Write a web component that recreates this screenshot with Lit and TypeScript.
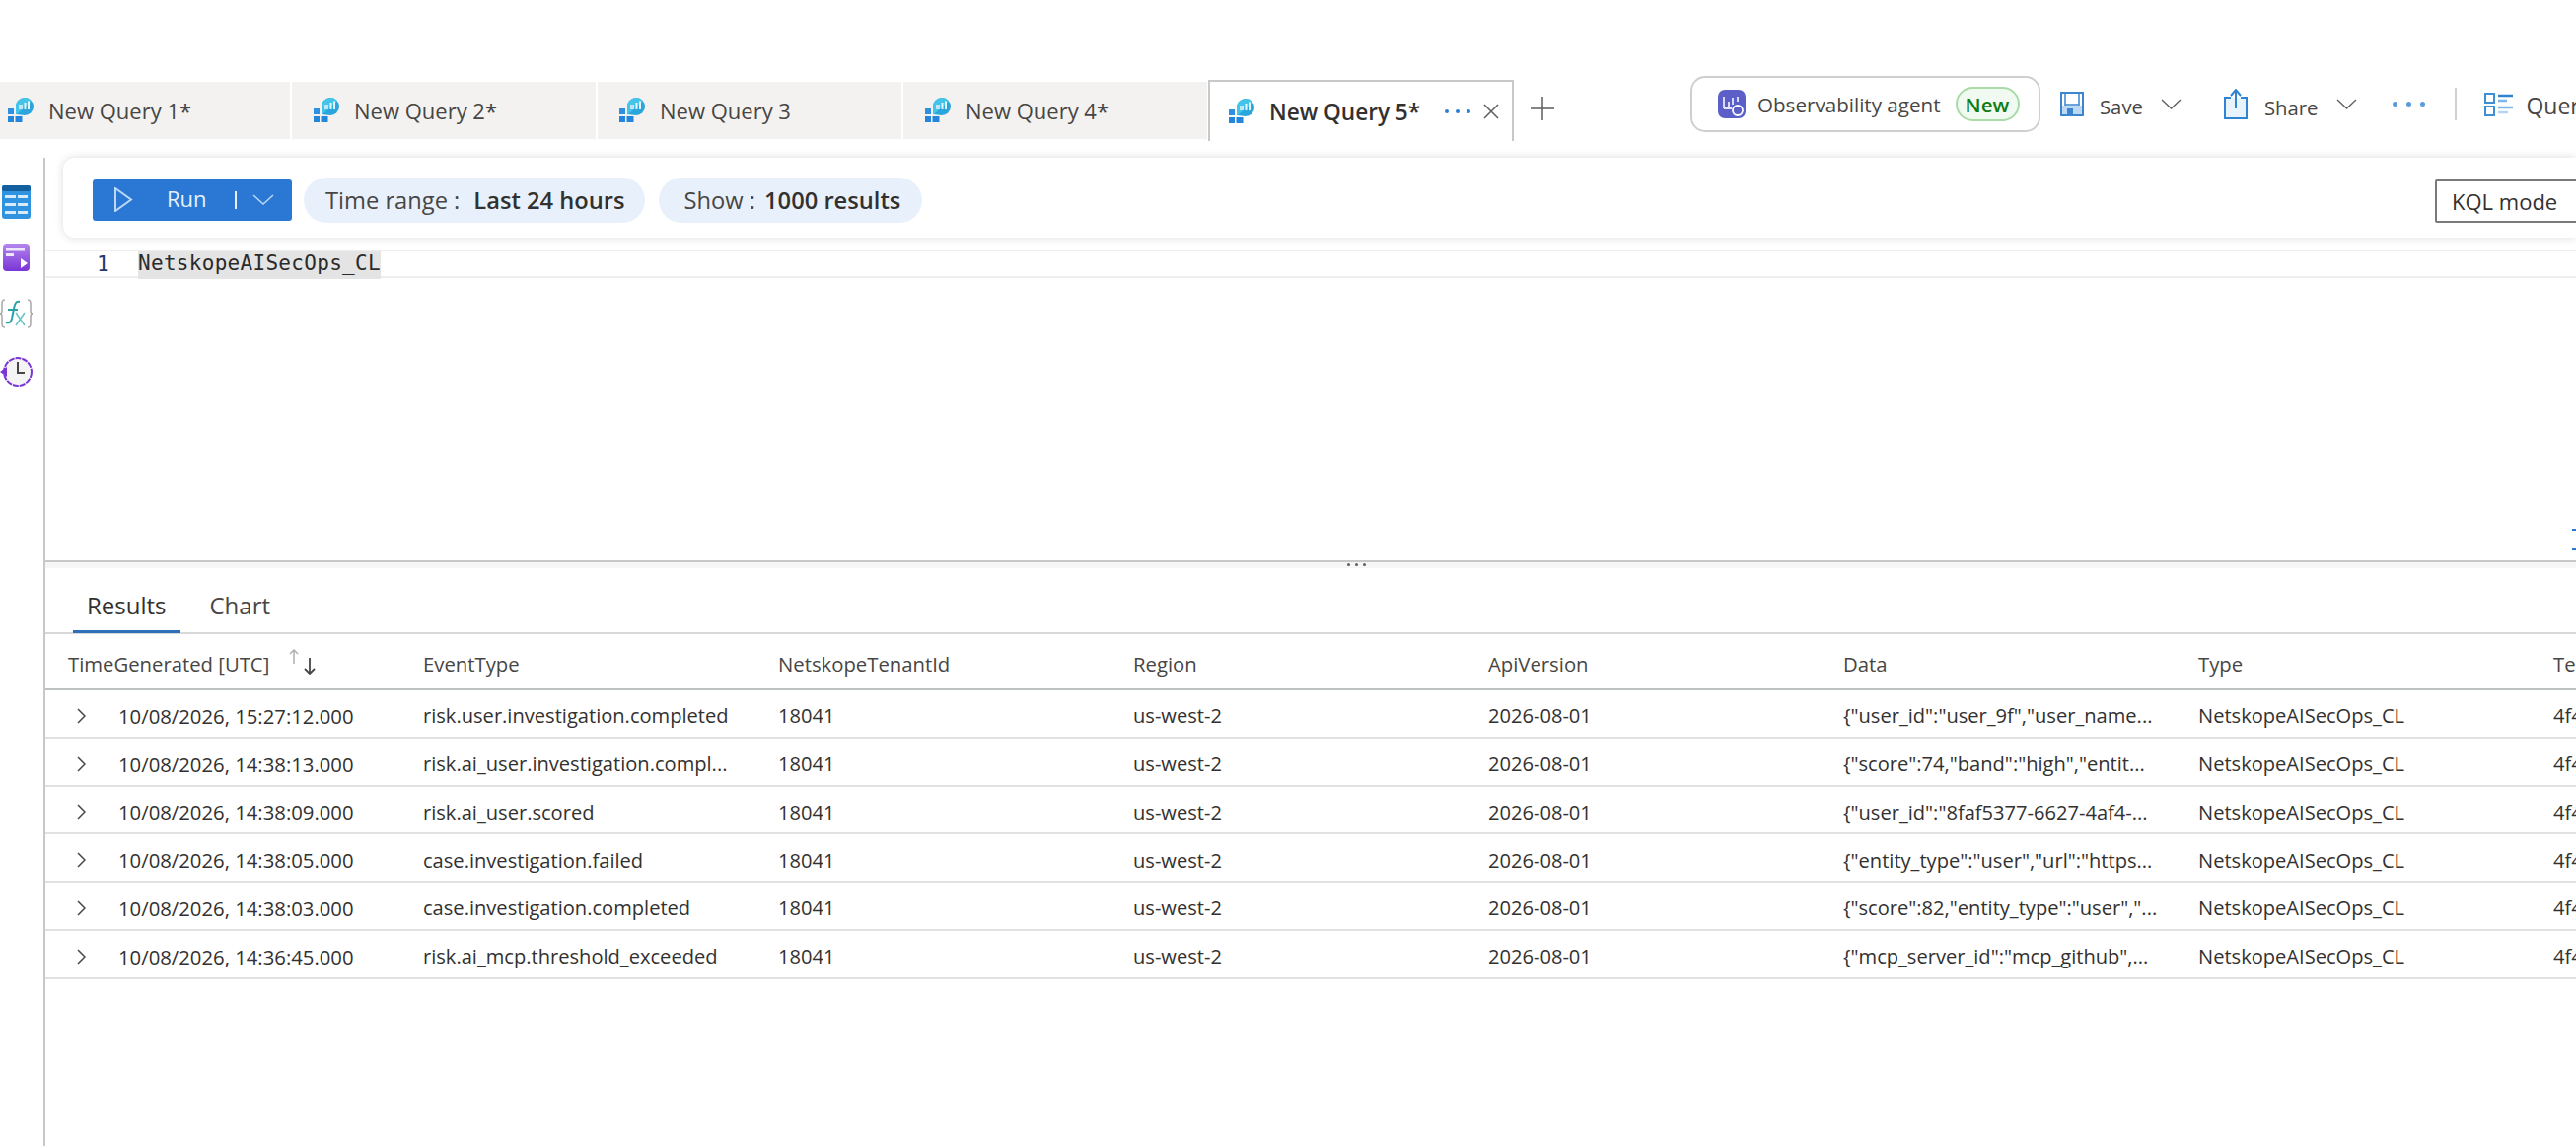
import { LitElement, html, css, svg } from 'lit'
import { customElement } from 'lit/decorators.js'

const tabs = ['New Query 1*', 'New Query 2*', 'New Query 3', 'New Query 4*']
const columns = ['EventType', 'NetskopeTenantId', 'Region', 'ApiVersion', 'Data', 'Type', 'TenantId']
const rows = [
  ['10/08/2026, 15:27:12.000', 'risk.user.investigation.completed', '{"user_id":"user_9f","user_name...'],
  ['10/08/2026, 14:38:13.000', 'risk.ai_user.investigation.compl...', '{"score":74,"band":"high","entit...'],
  ['10/08/2026, 14:38:09.000', 'risk.ai_user.scored', '{"user_id":"8faf5377-6627-4af4-...'],
  ['10/08/2026, 14:38:05.000', 'case.investigation.failed', '{"entity_type":"user","url":"https...'],
  ['10/08/2026, 14:38:03.000', 'case.investigation.completed', '{"score":82,"entity_type":"user","...'],
  ['10/08/2026, 14:36:45.000', 'risk.ai_mcp.threshold_exceeded', '{"mcp_server_id":"mcp_github",...'],
]

const chevronDown = html`<svg class="chev" width="21" height="11" viewBox="0 0 21 11"><path d="M1 1l9.500 9 9.500-9" fill="none" stroke="currentColor" stroke-width="1.300"/></svg>`

const tabIcon = svg`<svg class="tab-icon" width="26" height="26" viewBox="0 0 26 26">
  <rect x="0" y="11" width="6" height="6" fill="#2f8fe0"/>
  <rect x="0" y="19" width="6" height="6" fill="#2385dc"/>
  <rect x="7.500" y="19" width="7" height="6" fill="#2385dc"/>
  <path d="M8 17V9a9 9 0 1 1 9 9z" fill="#2aa6dc"/>
  <path d="M8 9a9 9 0 0 1 16-5.500L9 17H8z" fill="#45c4ea"/>
  <rect x="11" y="7" width="4" height="5" fill="#bfe6f8"/>
  <rect x="16.500" y="5" width="2" height="7" fill="#e4f5fc"/>
  <rect x="20" y="3.500" width="2" height="8.500" fill="#e4f5fc"/>
</svg>`

@customElement('app-root')
export class AppRoot extends LitElement {
  static styles = css`
    :host {
      display: block;
      width: 2612px;
      height: 1162px;
      overflow: hidden;
      background: #fff;
      font-family: 'Open Sans', 'Noto Sans', sans-serif;
      font-size: 20.3px;
      color: #323130;
      position: relative;
    }
    .top {
      display: flex;
      height: 160px;
      align-items: flex-start;
    }
    .tabs {
      display: flex;
      gap: 2px;
      padding-top: 83px;
      margin-left: -14px;
    }
    .tab {
      width: 308px;
      height: 58px;
      background: #f3f2f1;
      display: flex;
      align-items: center;
      gap: 15px;
      padding-left: 22px;
      box-sizing: border-box;
      color: #484644;
      white-space: nowrap;
      font-size: 22px;
    }
    .tab.active {
      background: #fff;
      height: 62px;
      margin-top: -2px;
      width: 310px;
      margin-left: -1px;
      border: 2px solid #c8c8c8;
      border-bottom: none;
      padding-left: 19px;
      color: #323130;
      font-weight: 600;
      font-size: 22.6px;
    }
    .tab.active .name { width: 163px; }
    .tab-icon { flex: none; }
    .dots { display: flex; gap: 7px; }
    .dots i { width: 4px; height: 4px; border-radius: 50%; background: #2b7cd3; display: block; }
    .tab-x { margin-left: -2px; color: #605e5c; }
    .plus { margin: 98px 0 0 17px; color: #605e5c; flex: none; }
    .commands {
      display: flex;
      align-items: center;
      margin: 77px 0 0 138px;
      flex: none;
      white-space: nowrap;
    }
    .agent {
      width: 355px;
      height: 57px;
      box-sizing: border-box;
      border: 2px solid #cfcfcf;
      border-radius: 15px;
      display: flex;
      align-items: center;
      padding-left: 26px;
      gap: 12px;
      color: #484644;
      font-size: 20.6px;
    }
    .badge {
      border: 2px solid #a9dba9;
      background: #f1faf1;
      color: #107c10;
      font-weight: 600;
      border-radius: 18px;
      height: 35px;
      box-sizing: border-box;
      width: 65px;
      display: flex;
      align-items: center;
      justify-content: center;
      margin-left: 3px;
    }
    .cmd { display: flex; align-items: center; color: #484644; }
    .cmd.save { margin-left: 20px; gap: 16px; }
    .cmd.save span { padding-top: 4px; }
    .cmd.share { margin-left: 43px; gap: 17px; }
    .cmd.share span { padding-top: 7px; }
    .chev { color: #605e5c; margin-left: 2px; }
    .cmd-dots { margin-left: 36px; display: flex; gap: 9px; }
    .cmd-dots i { width: 5px; height: 5px; border-radius: 50%; background: #5a9bdc; display: block; }
    .vsep { width: 2px; height: 33px; background: #d2d0ce; margin: 0 28px 0 30px; }
    .cmd.hub { gap: 12px; font-size: 23px; }
    .cmd.hub span { padding-top: 2px; }
    .body { display: flex; height: 1002px; }
    .rail {
      width: 46px;
      box-sizing: border-box;
      border-right: 2px solid #c8c8c8;
      display: flex;
      flex-direction: column;
      flex: none;
      padding-top: 28px;
    }
    .rail svg { display: block; }
    .table-icon { margin-bottom: 25px; }
    .form-icon { margin-bottom: 28px; }
    .fx-icon { margin-bottom: 28px; }
    .main { width: 2566px; flex: none; display: flex; flex-direction: column; position: relative; }
    .bar {
      margin-left: 18px;
      height: 81px;
      box-sizing: border-box;
      background: #fff;
      border-radius: 12px 0 0 12px;
      box-shadow: 0 0 10px rgba(0, 0, 0, 0.14);
      display: flex;
      align-items: center;
      padding: 4px 0 0 30px;
      flex: none;
      position: relative;
      z-index: 1;
    }
    .run {
      width: 202px;
      height: 42px;
      background: #2b78d4;
      border-radius: 3px;
      color: #fff;
      display: flex;
      align-items: center;
      padding-left: 22px;
      box-sizing: border-box;
      flex: none;
      font-size: 22px;
    }
    .run span { margin-left: 34px; color: #e6f0fb; width: 38px; padding-bottom: 3px; }
    .run b { width: 2px; height: 18px; background: #e6f0fb; margin: 0 16px 0 31px; }
    .pill {
      height: 46px;
      background: #e8f1fb;
      border-radius: 23px;
      display: flex;
      align-items: center;
      padding: 0 20px 0 22px;
      margin-left: 12px;
      white-space: nowrap;
      color: #484644;
      font-size: 23.7px;
    }
    .pill + .pill { margin-left: 14px; padding: 0 22px 0 26px; }
    .pill strong { font-weight: 600; color: #323130; margin-left: 14px; }
    .pill + .pill strong { margin-left: 9px; }
    .kql {
      position: absolute;
      left: 2405px;
      top: 22px;
      width: 200px;
      height: 44px;
      box-sizing: border-box;
      border: 2px solid #7a7a7a;
      border-radius: 2px;
      display: flex;
      align-items: center;
      padding-left: 15px;
      font-size: 22px;
    }
    .editor {
      height: 327px;
      flex: none;
      padding-top: 12px;
      box-sizing: border-box;
    }
    .line {
      height: 29px;
      border-top: 2px solid #eee;
      border-bottom: 2px solid #eee;
      box-sizing: border-box;
      display: flex;
      align-items: center;
      font-family: 'DejaVu Sans Mono', 'Liberation Mono', monospace;
      font-size: 21px;
      color: #2b2b2b;
    }
    .num { width: 94px; padding-left: 52px; box-sizing: border-box; color: #1f3a6e; }
    .sel { background: #e4e4e4; height: 29px; line-height: 27px; margin-top: 2px; letter-spacing: 0.3px; }
    .expand { position: absolute; left: 2562px; top: 375px; color: #2b78d4; }
    .splitter {
      height: 8px;
      box-sizing: border-box;
      flex: none;
      border-top: 2px solid #c8c8c8;
      background: #f6f6f6;
      display: flex;
      gap: 5px;
      padding: 1px 0 0 1320px;
    }
    .splitter i { width: 3px; height: 3px; border-radius: 50%; background: #605e5c; display: block; }
    .result-tabs {
      height: 67px;
      flex: none;
      box-sizing: border-box;
      border-bottom: 2px solid #d8d8d8;
      display: flex;
      padding-left: 28px;
      font-size: 24px;
    }
    .rt { padding: 21px 14px 0; height: 66px; box-sizing: border-box; color: #484644; }
    .rt.on { color: #323130; border-bottom: 3px solid #2f6fb7; margin-right: 16px; }
    .grid { display: grid; grid-template-columns: repeat(8, 360px); padding-left: 23px; width: 2900px; }
    .head, .row { display: contents; }
    .head > div {
      height: 57px;
      box-sizing: border-box;
      border-bottom: 2px solid #bdc1c1;
      display: flex;
      align-items: center;
      white-space: nowrap;
      color: #484644;
      margin: 0 -23px;
      padding: 4px 23px 0;
    }
    .row > div {
      height: 48.750px;
      box-sizing: border-box;
      border-bottom: 2px solid #e1e1e1;
      display: flex;
      align-items: center;
      white-space: nowrap;
      margin: 0 -23px;
      padding: 5px 0 0 23px;
      color: #323130;
      font-size: 20.1px;
    }
    .row .first { padding-left: 32px; gap: 33px; }
    .row .first span { font-size: 20.3px; }
    .sort { margin-left: 19px; margin-top: -4px; flex: none; }
  `

  renderRail() {
    return html`<div class="rail">
      <svg class="table-icon" width="44" height="34" viewBox="0 0 44 34">
        <rect x="2" y="0" width="29" height="34" rx="3" fill="#2f93e0"/>
        <rect x="2" y="0" width="29" height="6" rx="2" fill="#14609f"/>
        ${[10, 18, 26].map(
          (y) => svg`<rect x="5" y=${y} width="11" height="3" fill="#d6ecfb"/><rect x="18" y=${y} width="10" height="3" fill="#d6ecfb"/>`,
        )}
      </svg>
      <svg class="form-icon" width="44" height="28" viewBox="0 0 44 28">
        <defs><linearGradient id="pg" x1="0" y1="0" x2="0" y2="1"><stop offset="0" stop-color="#b486ee"/><stop offset="1" stop-color="#7a35d6"/></linearGradient></defs>
        <rect x="3" y="0" width="27" height="28" rx="4" fill="url(#pg)"/>
        <rect x="6" y="4" width="19" height="2.500" fill="#f0e6fb"/>
        <rect x="6" y="10" width="8" height="3" fill="#f0e6fb"/>
        <path d="M21 15l7 5-7 5z" fill="#fff"/>
      </svg>
      <svg class="fx-icon" width="44" height="30" viewBox="0 0 44 30">
        <path d="M5 1C2 1 2 3 2 7v5c0 2-1 3-2 3 1 0 2 1 2 3v5c0 4 0 6 3 6M28 1c3 0 3 2 3 6v5c0 2 1 3 2 3-1 0-2 1-2 3v5c0 4 0 6-3 6" fill="none" stroke="#a8a8a8" stroke-width="1.500"/>
        <path d="M20 3c-4-1-5 2-6 7l-2 10c-1 4-3 5-6 4M8 11h10" fill="none" stroke="#2aa0a8" stroke-width="2"/>
        <path d="M16 14l9 13M25 14l-9 13" fill="none" stroke="#6cc4c8" stroke-width="1.600"/>
      </svg>
      <svg width="44" height="32" viewBox="0 0 44 32">
        <circle cx="18" cy="16" r="14" fill="#f4f4f4" stroke="#7a35d6" stroke-width="2" stroke-dasharray="6 1"/>
        <path d="M18 6v11h7" fill="none" stroke="#484644" stroke-width="2"/>
        <path d="M0 16l7-5v10z" fill="#7a35d6"/>
      </svg>
    </div>`
  }

  render() {
    return html`
      <div class="top">
        <div class="tabs">
          ${tabs.map((t) => html`<div class="tab">${tabIcon}<span>${t}</span></div>`)}
          <div class="tab active">
            ${tabIcon}<span class="name">New Query 5*</span>
            <span class="dots"><i></i><i></i><i></i></span>
            <svg class="tab-x" width="16" height="16" viewBox="0 0 16 16"><path d="M1 1l14 14M15 1L1 15" stroke="currentColor" stroke-width="1.500"/></svg>
          </div>
        </div>
        <svg class="plus" width="24" height="24" viewBox="0 0 24 24"><path d="M12 0v24M0 12h24" stroke="currentColor" stroke-width="1.500"/></svg>
        <div class="commands">
          <div class="agent">
            <svg width="28" height="29" viewBox="0 0 28 29">
              <rect width="28" height="29" rx="7" fill="#5b5fc7"/>
              <path d="M6 7v12M11 12v7M15 8v7M20 7v5M6 19h8" stroke="#e6e6fa" stroke-width="1.800" fill="none"/>
              <circle cx="20" cy="21" r="5" fill="#5b5fc7" stroke="#fff" stroke-width="1.800"/>
            </svg>
            <span>Observability agent</span>
            <span class="badge">New</span>
          </div>
          <div class="cmd save">
            <svg width="24" height="25" viewBox="0 0 24 25">
              <path d="M1 1h22v23H1z" fill="#fff" stroke="#3b86cf" stroke-width="2"/>
              <rect x="2" y="14" width="20" height="9" fill="#bcd8f2"/>
              <path d="M5 14V2M19 14V2M5 13h14" stroke="#3b86cf" stroke-width="1.500" fill="none"/>
              <rect x="7" y="17" width="6" height="7" fill="#3b86cf"/>
            </svg>
            <span>Save</span>${chevronDown}
          </div>
          <div class="cmd share">
            <svg width="24" height="31" viewBox="0 0 24 31">
              <path d="M7 9H1v21h22V9h-6" fill="#e9f3fb" stroke="#2f84d2" stroke-width="2"/>
              <path d="M12 2v18M7 7l5-6 5 6" fill="none" stroke="#2f84d2" stroke-width="2"/>
            </svg>
            <span>Share</span>${chevronDown}
          </div>
          <span class="cmd-dots"><i></i><i></i><i></i></span>
          <span class="vsep"></span>
          <div class="cmd hub">
            <svg width="30" height="24" viewBox="0 0 30 24">
              <path d="M1 1h9v9H1zM1 14h9v9H1z" fill="#fff" stroke="#3f8fd8" stroke-width="2"/>
              <path d="M14 3h15" stroke="#2f84d2" stroke-width="2.500"/>
              <path d="M14 8h9" stroke="#7db5e6" stroke-width="2.500"/>
              <path d="M14 15h15" stroke="#7db5e6" stroke-width="2.500"/>
              <path d="M14 20h10" stroke="#b4d4f0" stroke-width="2.500"/>
            </svg>
            <span>Queries hub</span>
          </div>
        </div>
      </div>
      <div class="body">
        ${this.renderRail()}
        <div class="main">
          <div class="bar">
            <div class="run">
              <svg width="19" height="25" viewBox="0 0 19 25"><path d="M1 1l16 11.500L1 24z" fill="none" stroke="#bcd8f6" stroke-width="2"/></svg>
              <span>Run</span><b></b>
              <svg width="22" height="11" viewBox="0 0 22 11"><path d="M1 1l10 9 10-9" fill="none" stroke="#bcd8f6" stroke-width="1.500"/></svg>
            </div>
            <div class="pill">Time range : <strong>Last 24 hours</strong></div>
            <div class="pill">Show : <strong>1000 results</strong></div>
            <div class="kql">KQL mode</div>
          </div>
          <div class="editor">
            <div class="line"><span class="num">1</span><span class="sel">NetskopeAISecOps_CL</span></div>
          </div>
          <svg class="expand" width="6" height="24" viewBox="0 0 6 24"><path d="M0 2h6M0 22h6" stroke="currentColor" stroke-width="2"/></svg>
          <div class="splitter"><i></i><i></i><i></i></div>
          <div class="result-tabs">
            <div class="rt on">Results</div>
            <div class="rt">Chart</div>
          </div>
          <div class="grid">
            <div class="head">
              <div>TimeGenerated [UTC]
                <svg class="sort" width="30" height="26" viewBox="0 0 30 26">
                  <path d="M6 15V1M2 5l4-4 4 4" fill="none" stroke="#b0b0b0" stroke-width="1.500"/>
                  <path d="M22 9v16M17 20l5 5 5-5" fill="none" stroke="#484644" stroke-width="1.800"/>
                </svg>
              </div>
              ${columns.map((c) => html`<div>${c}</div>`)}
            </div>
            ${rows.map(
              (r) => html`<div class="row">
                <div class="first">
                  <svg width="9" height="16" viewBox="0 0 9 16"><path d="M1 1l7 7-7 7" fill="none" stroke="#484644" stroke-width="1.500"/></svg>
                  <span>${r[0]}</span>
                </div>
                <div>${r[1]}</div>
                <div>18041</div>
                <div>us-west-2</div>
                <div>2026-08-01</div>
                <div>${r[2]}</div>
                <div>NetskopeAISecOps_CL</div>
                <div>4f4a1c2e-90b1</div>
              </div>`,
            )}
          </div>
        </div>
      </div>
    `
  }
}
